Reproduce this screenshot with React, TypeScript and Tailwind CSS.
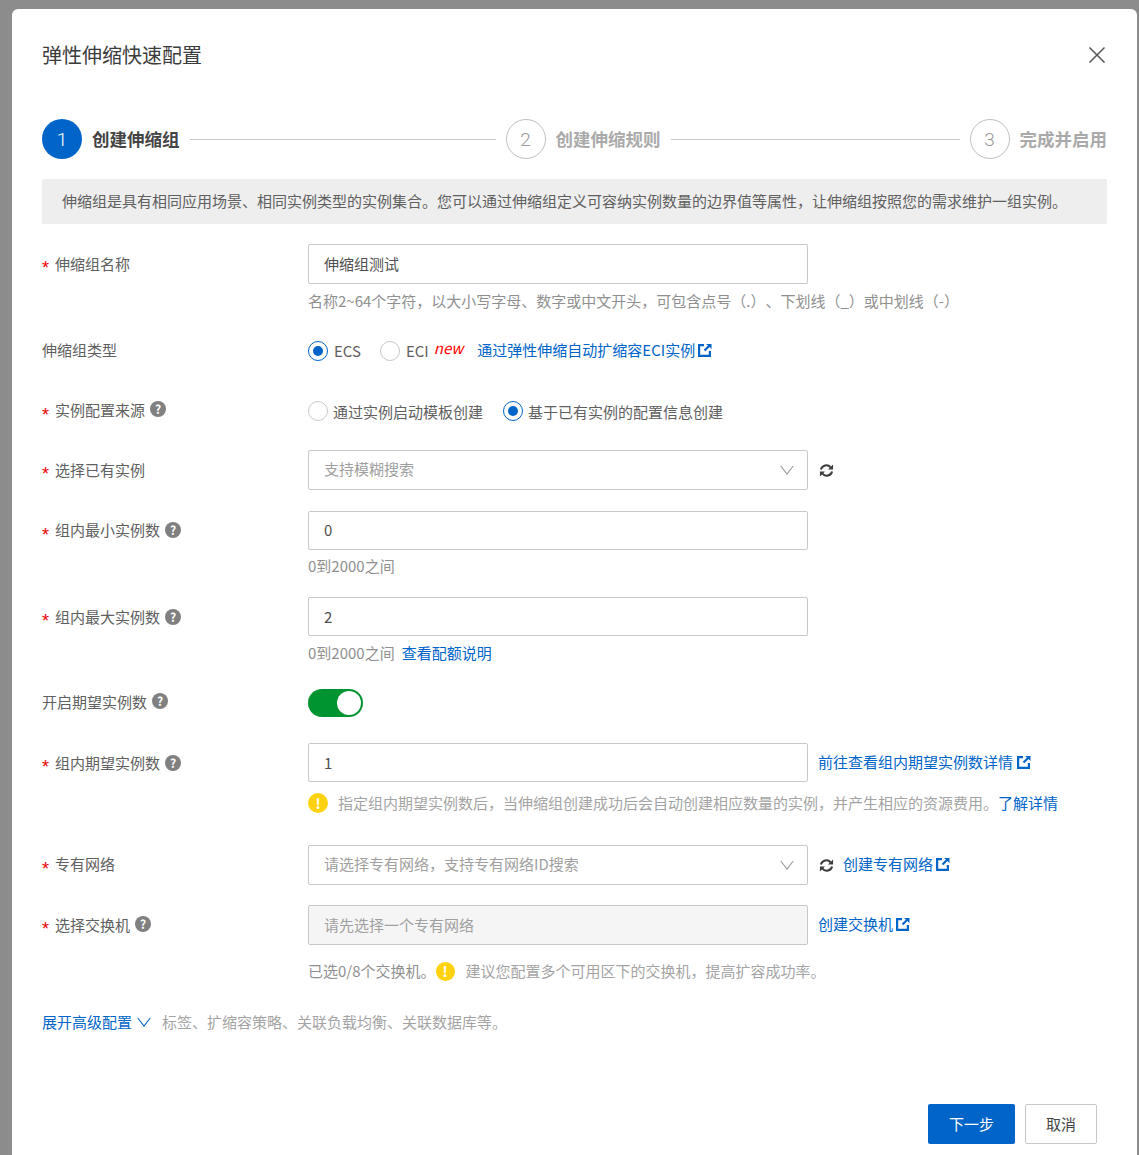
import type { ReactNode } from 'react'

const LINK = 'text-[#0064c8]'

function ExternalIcon({ className = '' }: { className?: string }) {
  return (
    <svg viewBox="0 0 14 14" className={`size-[14px] shrink-0 ${className}`} fill="none" stroke="#0064c8" strokeWidth="2.2">
      <path d="M6 2.1H1.1v10.8h10.8V8" />
      <path d="M13.5 6V.9H8.2z" fill="#0064c8" stroke="none" />
      <path d="M11.5 2.5 6.5 7.5" />
    </svg>
  )
}

function HelpIcon() {
  return (
    <span className="mb-[2px] ml-[5px] flex size-[16px] items-center justify-center rounded-full bg-[#808080] text-[12px] leading-none font-bold text-white">
      ?
    </span>
  )
}

function RefreshIcon() {
  return (
    <svg viewBox="0 0 16 16" className="size-[15px] shrink-0" fill="none" stroke="#3c3c3c" strokeWidth="2.1">
      <path d="M2 7A6 6 0 0 1 12.4 4.6" />
      <path d="M14 9A6 6 0 0 1 3.6 11.4" />
      <path d="M15 1.6V7H9.6z" fill="#3c3c3c" stroke="none" />
      <path d="M1 14.4V9H6.4z" fill="#3c3c3c" stroke="none" />
    </svg>
  )
}

function Chevron({ color = '#999', size = 14 }: { color?: string; size?: number }) {
  return (
    <svg width={size} height={size} viewBox="0 0 14 14" fill="none" stroke={color} strokeWidth="1.1">
      <path d="M.8 3 7 11 13.2 3" />
    </svg>
  )
}

function WarnIcon({ size = 'size-[20px]' }: { size?: string }) {
  return (
    <span className={`flex ${size} shrink-0 items-center justify-center rounded-full bg-[#ffd20f] text-[14px] leading-none font-bold text-white`}>
      !
    </span>
  )
}

function Radio({ checked }: { checked?: boolean }) {
  return (
    <span
      className={`flex size-[20px] shrink-0 items-center justify-center rounded-full border bg-white ${
        checked ? 'border-[#0064c8]' : 'border-[#c8c8c8]'
      }`}
    >
      {checked && <span className="size-[10px] rounded-full bg-[#0064c8]" />}
    </span>
  )
}

function Label({ required, help, className = '', children }: { required?: boolean; help?: boolean; className?: string; children: ReactNode }) {
  return (
    <div className="flex w-[266px] shrink-0 items-center text-[15px] text-[#606060]">
      {required && (
        <span className="mt-[8px] w-[13px] font-['Liberation_Sans',sans-serif] text-[18px] leading-none text-[#e60000]">*</span>
      )}
      <div className={`flex items-center ${className}`}>
        <span>{children}</span>
        {help && <HelpIcon />}
      </div>
    </div>
  )
}

function Field({
  value,
  disabled,
  placeholder,
  select,
  textClass = '',
}: {
  value?: string
  disabled?: boolean
  placeholder?: string
  select?: boolean
  textClass?: string
}) {
  return (
    <div
      className={`flex h-full w-[500px] shrink-0 items-center justify-between rounded-[2px] border border-[#c8c8c8] pr-[13px] pl-[15px] text-[15px] ${
        disabled ? 'bg-[#f5f5f5]' : 'bg-white'
      } ${value ? 'text-[#505050]' : 'text-[#a0a0a0]'}`}
    >
      <span className={textClass}>{value ?? placeholder}</span>
      {select && <Chevron />}
    </div>
  )
}

function Help({ className = '', children }: { className?: string; children: ReactNode }) {
  return <div className={`ml-[266px] flex h-[20px] items-center text-[15px] text-[#909090] ${className}`}>{children}</div>
}

function Step({ n, title, active }: { n: number; title: string; active?: boolean }) {
  return (
    <div className="flex shrink-0 items-center gap-[10px]">
      <span
        className={`flex size-[40px] items-center justify-center rounded-full pt-[2px] font-['Roboto',sans-serif] text-[19px] font-light ${
          active ? 'bg-[#0064c8] text-white' : 'border border-[#c0c0c0] text-[#999]'
        }`}
      >
        {n}
      </span>
      <span className={`text-[17.5px] font-bold ${active ? 'text-[#444]' : 'text-[#aaa]'}`}>{title}</span>
    </div>
  )
}

export default function App() {
  return (
    <div className="h-[1155px] overflow-hidden bg-[#8c8c8c] pt-[9px] pl-[12px] font-['Noto_Sans_CJK_SC',sans-serif] [text-spacing-trim:space-all]">
      <div className="h-[1200px] w-[1125px] rounded-[6px] bg-white px-[30px] pt-[32px]">
        <div className="flex h-[28px] items-center justify-between">
          <h1 className="text-[20px] font-normal text-[#3c3c3c]">弹性伸缩快速配置</h1>
          <svg width="18" height="18" viewBox="0 0 18 18" className="mr-[1px]" fill="none" stroke="#555" strokeWidth="1.5">
            <path d="M1.5 1.5 16.5 16.5M16.5 1.5 1.5 16.5" />
          </svg>
        </div>

        <div className="mt-[50px] flex h-[40px] items-center gap-[10px]">
          <Step n={1} title="创建伸缩组" active />
          <div className="h-px w-[306px] bg-[#c8c8c8]" />
          <Step n={2} title="创建伸缩规则" />
          <div className="h-px flex-1 bg-[#c8c8c8]" />
          <Step n={3} title="完成并启用" />
        </div>

        <div className="mt-[20px] flex h-[45px] items-center rounded-[2px] bg-[#eeeeee] px-[20px] text-[15px] text-[#606060]">
          伸缩组是具有相同应用场景、相同实例类型的实例集合。您可以通过伸缩组定义可容纳实例数量的边界值等属性，让伸缩组按照您的需求维护一组实例。
        </div>

        <div className="mt-[20px] flex h-[40px]">
          <Label required>伸缩组名称</Label>
          <Field value="伸缩组测试" />
        </div>
        <Help className="mt-[7px]">名称2~64个字符，以大小写字母、数字或中文开头，可包含点号（.）、下划线（_）或中划线（-）</Help>

        <div className="mt-[28px] flex h-[24px]">
          <Label className="-translate-y-px">伸缩组类型</Label>
          <div className="flex items-center text-[15px] text-[#606060]">
            <Radio checked />
            <span className="ml-[6px]">ECS</span>
            <span className="ml-[19px]">
              <Radio />
            </span>
            <span className="ml-[6px]">ECI</span>
            <span className="mb-[6px] ml-[5px] text-[15px] text-[#f00] italic">new</span>
            <span className={`ml-[14px] -translate-y-px ${LINK}`}>通过弹性伸缩自动扩缩容ECI实例</span>
            <ExternalIcon className="ml-[3px] -translate-y-px" />
          </div>
        </div>

        <div className="mt-[36px] flex h-[24px]">
          <Label required help className="-translate-y-px">实例配置来源</Label>
          <div className="flex items-center text-[15px] text-[#606060]">
            <Radio />
            <span className="ml-[5px] translate-y-px">通过实例启动模板创建</span>
            <span className="ml-[20px]">
              <Radio checked />
            </span>
            <span className="ml-[5px] translate-y-px">基于已有实例的配置信息创建</span>
          </div>
        </div>

        <div className="mt-[27px] flex h-[40px]">
          <Label required>选择已有实例</Label>
          <Field placeholder="支持模糊搜索" select textClass="-translate-y-px" />
          <div className="ml-[11px] flex items-center">
            <RefreshIcon />
          </div>
        </div>

        <div className="mt-[21px] flex h-[39px]">
          <Label required help>组内最小实例数</Label>
          <Field value="0" />
        </div>
        <Help className="mt-[6px]">0到2000之间</Help>

        <div className="mt-[21px] flex h-[39px]">
          <Label required help className="translate-y-px">组内最大实例数</Label>
          <Field value="2" textClass="translate-y-px" />
        </div>
        <Help className="mt-[7px]">
          0到2000之间<span className={`ml-[7px] ${LINK}`}>查看配额说明</span>
        </Help>

        <div className="mt-[26px] flex h-[28px]">
          <Label help className="-translate-y-px">开启期望实例数</Label>
          <div className="flex h-[28px] w-[55px] items-center justify-end rounded-full bg-[#009431] pr-[2px]">
            <span className="size-[24px] rounded-full bg-white" />
          </div>
        </div>

        <div className="mt-[26px] flex h-[39px]">
          <Label required help className="translate-y-px">组内期望实例数</Label>
          <Field value="1" textClass="translate-y-px" />
          <div className="ml-[10px] flex items-center text-[15px]">
            <span className={LINK}>前往查看组内期望实例数详情</span>
            <ExternalIcon className="ml-[4px] -translate-y-px" />
          </div>
        </div>
        <Help className="mt-[11px] text-[#a4a4a4]">
          <WarnIcon />
          <span className="ml-[10px]">指定组内期望实例数后，当伸缩组创建成功后会自动创建相应数量的实例，并产生相应的资源费用。</span>
          <span className={LINK}>了解详情</span>
        </Help>

        <div className="mt-[32px] flex h-[40px]">
          <Label required className="-translate-y-px">专有网络</Label>
          <Field placeholder="请选择专有网络，支持专有网络ID搜索" select textClass="-translate-y-px" />
          <div className="ml-[11px] flex items-center text-[15px]">
            <RefreshIcon />
            <span className={`ml-[9px] -translate-y-px ${LINK}`}>创建专有网络</span>
            <ExternalIcon className="ml-[3px] -translate-y-px" />
          </div>
        </div>

        <div className="mt-[20px] flex h-[40px]">
          <Label required help>选择交换机</Label>
          <Field placeholder="请先选择一个专有网络" disabled />
          <div className="ml-[10px] flex items-center text-[15px]">
            <span className={`-translate-y-px ${LINK}`}>创建交换机</span>
            <ExternalIcon className="ml-[3px] -translate-y-px" />
          </div>
        </div>
        <Help className="mt-[16px]">
          已选0/8个交换机。
          <WarnIcon size="size-[19px]" />
          <span className="ml-[11px] text-[#a4a4a4]">建议您配置多个可用区下的交换机，提高扩容成功率。</span>
        </Help>

        <div className="mt-[31px] flex h-[20px] items-center text-[15px]">
          <span className={LINK}>展开高级配置</span>
          <span className="ml-[5px]">
            <Chevron color="#0064c8" />
          </span>
          <span className="ml-[11px] text-[#a4a4a4]">标签、扩缩容策略、关联负载均衡、关联数据库等。</span>
        </div>

        <div className="mt-[72px] flex justify-end gap-[10px] pr-[10px] text-[15px]">
          <button className="h-[40px] w-[87px] rounded-[2px] bg-[#0064c8] text-white">下一步</button>
          <button className="h-[40px] w-[72px] rounded-[2px] border border-[#c8c8c8] bg-white text-[#444]">取消</button>
        </div>
      </div>
    </div>
  )
}
